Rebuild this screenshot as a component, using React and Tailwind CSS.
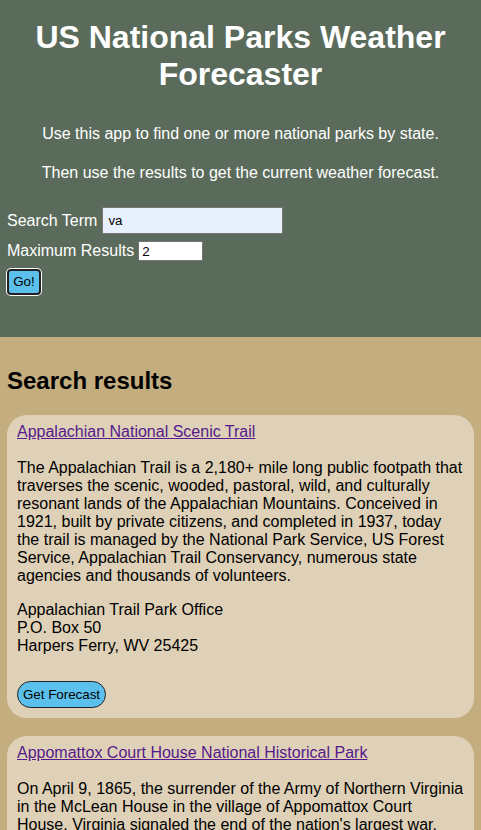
const parks = [
  {
    name: "Appalachian National Scenic Trail",
    description:
      "The Appalachian Trail is a 2,180+ mile long public footpath that traverses the scenic, wooded, pastoral, wild, and culturally resonant lands of the Appalachian Mountains. Conceived in 1921, built by private citizens, and completed in 1937, today the trail is managed by the National Park Service, US Forest Service, Appalachian Trail Conservancy, numerous state agencies and thousands of volunteers.",
    address: ["Appalachian Trail Park Office", "P.O. Box 50", "Harpers Ferry, WV 25425"],
  },
  {
    name: "Appomattox Court House National Historical Park",
    description:
      "On April 9, 1865, the surrender of the Army of Northern Virginia in the McLean House in the village of Appomattox Court House, Virginia signaled the end of the nation's largest war. Two important questions were answered by the surrender of Lee to Grant and the subsequent surrender of the other Confederate armies: the Union would remain, and slavery would be abolished.",
    address: ["Appomattox Court House NHP", "P.O. Box 218", "Appomattox, VA 24522"],
  },
];

function ParkCard({ park }) {
  return (
    <div className="rounded-[20px] bg-[#dfd1b7] px-[10px] pt-[8px] pb-[10px] leading-[18px]">
      <a href="#" className="text-[#551a8b] underline">
        {park.name}
      </a>
      <p className="mt-[18px]">{park.description}</p>
      <p className="mt-[16px]">
        {park.address.map((line) => (
          <span key={line} className="block">
            {line}
          </span>
        ))}
      </p>
      <button className="mt-[26px] rounded-full border border-[#222] bg-[#5bc0eb] px-[5px] py-[5px] text-[13.33px] leading-[15px] text-black">
        Get Forecast
      </button>
    </div>
  );
}

export default function App() {
  return (
    <div className="min-h-screen bg-[#c4ad7f] font-['Liberation_Sans',Arial,sans-serif] text-[16px] text-black">
      {/* Header + search form */}
      <header className="bg-[#5b6b5b] px-[7px] pt-[19px] pb-[42px] text-white">
        <h1 className="text-center text-[32px] font-bold leading-[36.8px]">
          US National Parks Weather Forecaster
        </h1>
        <p className="mt-[32px] text-center leading-[18.4px]">
          Use this app to find one or more national parks by state.
        </p>
        <p className="mt-[20.6px] text-center leading-[18.4px]">
          Then use the results to get the current weather forecast.
        </p>

        <div className="mt-[25px] flex flex-col items-start">
          <label className="flex items-center gap-[5px]">
            <span>Search Term</span>
            <input
              defaultValue="va"
              className="h-[27px] w-[181px] border border-[#767676] bg-[#e8f0fe] px-[5px] text-[13.33px] text-black outline-none"
            />
          </label>
          <label className="mt-[5px] flex items-center gap-[4px]">
            <span>Maximum Results</span>
            <input
              defaultValue="2"
              className="h-[20px] w-[65px] border border-[#767676] bg-white px-[3px] text-[13.33px] text-black outline-none"
            />
          </label>
          <button className="mt-[6px] flex h-[26px] w-[34px] items-center justify-center rounded-[4px] border-2 border-[#222] bg-[#5bc0eb] text-[13.33px] text-black ring-1 ring-white">
            Go!
          </button>
        </div>
      </header>

      {/* Results */}
      <main className="px-[7px] pt-[30px] pb-[20px]">
        <h2 className="text-[24px] font-bold leading-[27.6px]">Search results</h2>
        <div className="mt-[20px] flex flex-col gap-[18px]">
          {parks.map((park) => (
            <ParkCard key={park.name} park={park} />
          ))}
        </div>
      </main>
    </div>
  );
}
